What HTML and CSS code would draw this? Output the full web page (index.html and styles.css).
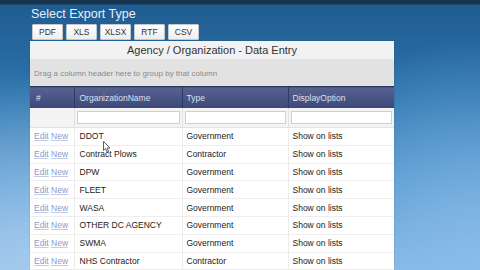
FILE: index.html
```html
<!DOCTYPE html>
<html lang="en">
<head>
  <meta charset="UTF-8">
  <title>Agency / Organization - Data Entry</title>
  <link rel="stylesheet" href="styles.css">
</head>
<body>
  <div class="page">
    <h1 class="export-title">Select Export Type</h1>
    <div class="export-buttons">
      <button class="export-btn">PDF</button>
      <button class="export-btn">XLS</button>
      <button class="export-btn">XLSX</button>
      <button class="export-btn">RTF</button>
      <button class="export-btn">CSV</button>
    </div>

    <div class="grid-panel">
      <div class="grid-title">Agency / Organization - Data Entry</div>
      <div class="group-area">Drag a column header here to group by that column</div>
      <table class="grid">
        <colgroup>
          <col class="col-cmd">
          <col class="col-name">
          <col class="col-type">
          <col class="col-display">
        </colgroup>
        <thead>
          <tr class="head-row">
            <th>#</th>
            <th>OrganizationName</th>
            <th>Type</th>
            <th>DisplayOption</th>
          </tr>
          <tr class="filter-row">
            <td></td>
            <td><input type="text"></td>
            <td><input type="text"></td>
            <td><input type="text"></td>
          </tr>
        </thead>
        <tbody>
          <tr><td class="cmd"><a href="#">Edit</a> <a href="#">New</a></td><td>DDOT</td><td>Government</td><td>Show on lists</td></tr>
          <tr><td class="cmd"><a href="#">Edit</a> <a href="#">New</a></td><td>Contract Plows</td><td>Contractor</td><td>Show on lists</td></tr>
          <tr><td class="cmd"><a href="#">Edit</a> <a href="#">New</a></td><td>DPW</td><td>Government</td><td>Show on lists</td></tr>
          <tr><td class="cmd"><a href="#">Edit</a> <a href="#">New</a></td><td>FLEET</td><td>Government</td><td>Show on lists</td></tr>
          <tr><td class="cmd"><a href="#">Edit</a> <a href="#">New</a></td><td>WASA</td><td>Government</td><td>Show on lists</td></tr>
          <tr><td class="cmd"><a href="#">Edit</a> <a href="#">New</a></td><td>OTHER DC AGENCY</td><td>Government</td><td>Show on lists</td></tr>
          <tr><td class="cmd"><a href="#">Edit</a> <a href="#">New</a></td><td>SWMA</td><td>Government</td><td>Show on lists</td></tr>
          <tr><td class="cmd"><a href="#">Edit</a> <a href="#">New</a></td><td>NHS Contractor</td><td>Contractor</td><td>Show on lists</td></tr>
        </tbody>
      </table>
    </div>
  </div>

  <svg class="cursor" width="8" height="12" viewBox="0 0 8 12">
    <path d="M0.5 0.5 L0.5 9.5 L2.6 7.6 L4.2 11.2 L5.6 10.6 L4.1 7.1 L7 7 Z" fill="#fff" stroke="#333" stroke-width="0.8"/>
  </svg>
</body>
</html>
```

FILE: styles.css
```css
html, body {
  margin: 0;
  padding: 0;
  height: 100%;
  overflow: hidden;
}

body {
  font-family: "Liberation Sans", Arial, sans-serif;
  background:
    linear-gradient(to bottom, #17344f 0, #17344f 4px, transparent 5px),
    radial-gradient(ellipse 260px 200px at 10% 100%, rgba(170, 205, 240, 0.9), transparent),
    radial-gradient(ellipse 200px 220px at 100% 95%, rgba(140, 190, 235, 0.8), transparent),
    linear-gradient(to bottom, #1f5a8e 0, #2c74ac 35%, #5a9cd2 75%, #86b8e2 100%);
  color: #222;
}

.page {
  padding: 6px 0 0 30px;
}

.export-title {
  margin: 0 0 0 1px;
  font-size: 12.5px;
  font-weight: normal;
  color: #e6f0fb;
  line-height: 17px;
}

.export-buttons {
  display: flex;
  gap: 3px;
  margin: 1px 0 1px 2px;
}

.export-btn {
  font-family: "Liberation Sans", Arial, sans-serif;
  font-size: 8.5px;
  color: #333;
  width: 31px;
  height: 16px;
  padding: 0;
  background: linear-gradient(to bottom, #ffffff, #eeeeee);
  border: 1px solid #c4c8cc;
  border-radius: 1px;
}

.grid-panel {
  width: 364px;
  background: #fff;
  box-shadow: 0 0 1px rgba(0, 0, 0, 0.3);
}

.grid-title {
  height: 18px;
  line-height: 18px;
  text-align: center;
  font-size: 11px;
  color: #333;
  background: #f2f2f2;
  border-bottom: 1px solid #e4e4e4;
}

.group-area {
  height: 26px;
  padding: 7px 0 0 4px;
  box-sizing: border-box;
  font-size: 8px;
  line-height: 14px;
  color: #8a8a8a;
  background: #e2e2e2;
}

.grid {
  width: 364px;
  border-collapse: collapse;
  table-layout: fixed;
  font-size: 8.5px;
}

.col-cmd { width: 44px; }
.col-name { width: 108px; }
.col-type { width: 106px; }
.col-display { width: 106px; }

.head-row th {
  height: 21px;
  padding: 0 4px;
  text-align: left;
  font-weight: normal;
  color: #dbe2f2;
  background: linear-gradient(to bottom, #56628f, #3c4878);
  border-left: 1px solid #2f3a63;
  border-top: 1px solid #2c355a;
}

.head-row th:first-child {
  border-left: none;
  padding-left: 6px;
}

.head-row th:nth-child(2) {
  padding-left: 5px;
}

.filter-row td {
  height: 19px;
  padding: 0 2px;
  background: #f4f4f4;
  border-left: 1px solid #e2e2e2;
  border-bottom: 1px solid #e2e2e2;
}

.filter-row td:first-child {
  border-left: none;
}

.filter-row input {
  display: block;
  width: 100%;
  height: 13px;
  box-sizing: border-box;
  border: 1px solid #cfcfcf;
  background: #fff;
  padding: 0;
}

.grid tbody td {
  height: 16.8px;
  padding: 0 4px;
  color: #1a1a1a;
  border-left: 1px solid #ececec;
  border-bottom: 1px solid #eeeeee;
  white-space: nowrap;
  overflow: hidden;
}

.grid tbody td:first-child {
  border-left: none;
}

.grid tbody td:nth-child(2) {
  padding-left: 5px;
}

.cmd a {
  color: #8b9bcb;
  text-decoration: underline;
  text-decoration-color: #c4cce4;
}

.cursor {
  position: absolute;
  left: 103px;
  top: 141px;
}
```
